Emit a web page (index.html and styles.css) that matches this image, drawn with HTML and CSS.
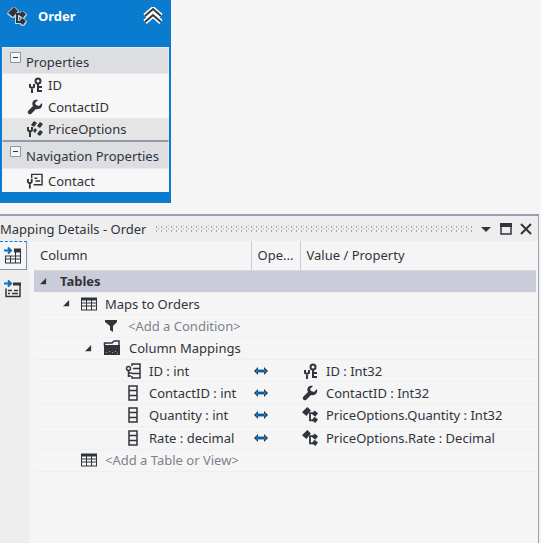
FILE: index.html
```html
<!DOCTYPE html>
<html lang="en">
<head>
<meta charset="utf-8">
<title>Mapping Details - Order</title>
<link rel="stylesheet" href="styles.css">
</head>
<body>
<svg class="sprite" aria-hidden="true">
  <symbol id="entity" viewBox="0 0 18 18">
    <path d="M6 0l4 4-5 6-5-4z"/>
    <path d="M8 7h5M9 7v8h4" fill="none" stroke="currentColor" stroke-width="2"/>
    <path d="M14 4l4 3-3 4-4-3zM14 11l4 3-3 4-4-3z"/>
  </symbol>
  <symbol id="key" viewBox="0 0 16 16">
    <g fill="none" stroke="currentColor" stroke-width="2">
      <circle cx="11" cy="4" r="2.5"/>
      <path d="M11 6v9M11 10h4M11 14h4"/>
      <path d="M3 7v3l2 1 2-1V7M5 11v5"/>
    </g>
  </symbol>
  <symbol id="wrench" viewBox="0 0 16 16">
    <path d="M15 4l-3 3-3-1-1-2 3-3C7 0 4 3 6 7l-5 5c-1 2 1 4 3 3l5-5c4 1 7-2 6-6z"/>
  </symbol>
  <symbol id="complex" viewBox="0 0 16 16">
    <path d="M7 0l3 2-3 4-3-2zM13 1l3 2-3 4-3-2zM13 9l3 2-3 4-3-2zM8 7l2 2-2 3-2-2z"/>
    <path d="M1 6v3l2 2 2-2V6M3 10v6" fill="none" stroke="currentColor" stroke-width="2"/>
  </symbol>
  <symbol id="navigation" viewBox="0 0 17 16">
    <path d="M5 5V1h11v11H7M8 5h3M9 8h5" fill="none" stroke="currentColor" stroke-width="1.5"/>
    <path d="M1 6v3l2 2 2-2V6M3 10v6" fill="none" stroke="currentColor" stroke-width="2"/>
  </symbol>
  <symbol id="table" viewBox="0 0 16 15">
    <path d="M0 1h16v13H0z"/>
    <path class="hole" d="M1 4h4v2H1zM6 4h4v2H6zM11 4h4v2h-4zM1 7h4v2H1zM6 7h4v2H6zM11 7h4v2h-4zM1 10h4v3H1zM6 10h4v3H6zM11 10h4v3h-4z"/>
  </symbol>
  <symbol id="filter" viewBox="0 0 12 12">
    <path d="M0 0h12v2L8 6v6L5 10V6L0 2z"/>
  </symbol>
  <symbol id="folder" viewBox="0 0 18 16">
    <path d="M1 5h16v10H1z"/>
    <path d="M1.500 6V3H9l2-2h5v5" fill="none" stroke="currentColor" stroke-width="1.500"/>
    <path class="dots" d="M3 12h1v1H3zM6 11h1v1H6zM9 12h1v1H9zM12 11h1v1h-1zM14 13h1v1h-1z"/>
  </symbol>
  <symbol id="column" viewBox="0 0 10 16">
    <path d="M1 1h8v14H1zM1 5.500h8M1 10.500h8" fill="none" stroke="currentColor" stroke-width="1.500"/>
  </symbol>
  <symbol id="keycolumn" viewBox="0 0 16 16">
    <path d="M7 3V1h8v14H7v-2M8 5.500h7M7 10.500h8" fill="none" stroke="currentColor" stroke-width="1.500"/>
    <path d="M3.500 8v6M4 10h3M4 13h2" fill="none" stroke="currentColor" stroke-width="1.500"/>
    <circle cx="3.500" cy="5.500" r="2" fill="none" stroke="currentColor" stroke-width="1.500"/>
  </symbol>
  <symbol id="maps" viewBox="0 0 14 8">
    <path d="M4 0v8L0 4zM10 0v8l4-4z"/>
    <path d="M2 4h10" fill="none" stroke="#0a7bd0" stroke-width="3"/>
    <path d="M4 4h6" fill="none" stroke="currentColor" stroke-width="1"/>
  </symbol>
  <symbol id="map-table" viewBox="0 0 18 17">
    <path d="M10 1h7v15H1V8h9z"/>
    <path class="hole" d="M2 9h4v2H2zM7 9h4v2H7zM12 9h4v2h-4zM9 5h2v3H9zM12 5h4v3h-4zM2 12h4v3H2zM7 12h4v3H7zM12 12h4v3h-4z"/>
    <path d="M0 3h6M4 0l3 3-3 3" fill="none" stroke="#0a6fbd" stroke-width="2"/>
  </symbol>
  <symbol id="map-function" viewBox="0 0 18 17">
    <path d="M9 2h8v3H9z"/>
    <path d="M2 8v8h14V4M4 10h4M10 10h4M4 13h2M8 13h6" fill="none" stroke="currentColor" stroke-width="1.500"/>
    <path d="M0 3h6M4 0l3 3-3 3" fill="none" stroke="#0a6fbd" stroke-width="2"/>
  </symbol>
  <symbol id="expanded" viewBox="0 0 8 8"><path d="M7 0v7H0z"/></symbol>
  <symbol id="minus" viewBox="0 0 11 11">
    <path d="M.5.5h10v10H.5z" fill="#f4f5f8" stroke="#8b95a6"/>
    <path d="M3 5h5v1H3z"/>
  </symbol>
  <symbol id="chevrons" viewBox="0 0 20 18">
    <path d="M2 9l8-7 8 7M2 15l8-7 8 7" fill="none" stroke="#fff" stroke-width="5"/>
    <path d="M2 9l8-7 8 7M2 15l8-7 8 7" fill="none" stroke="#333a42" stroke-width="2"/>
  </symbol>
  <symbol id="menu" viewBox="0 0 10 12"><path d="M0 4h10L5 9z"/></symbol>
  <symbol id="window" viewBox="0 0 12 12"><path d="M1 1h10v10H1z" fill="none" stroke="currentColor" stroke-width="1.500"/><path d="M0 0h12v4H0z"/></symbol>
  <symbol id="close" viewBox="0 0 12 12"><path d="M1 1l10 10M11 1L1 11" fill="none" stroke="currentColor" stroke-width="2"/></symbol>
</svg>

<main class="designer">
  <article class="entity">
    <header class="entity-head">
      <svg class="icon-lg outlined"><use href="#entity"/></svg>
      <h1>Order</h1>
      <button class="plain" aria-label="Collapse entity"><svg class="icon-chevrons"><use href="#chevrons"/></svg></button>
    </header>
    <div class="entity-body">
      <h2><button class="plain" aria-label="Collapse Properties"><svg class="icon-minus"><use href="#minus"/></svg></button>Properties</h2>
      <ul>
        <li><svg class="icon"><use href="#key"/></svg>ID</li>
        <li><svg class="icon"><use href="#wrench"/></svg>ContactID</li>
        <li class="selected"><svg class="icon"><use href="#complex"/></svg>PriceOptions</li>
      </ul>
      <h2 class="divided"><button class="plain" aria-label="Collapse Navigation Properties"><svg class="icon-minus"><use href="#minus"/></svg></button>Navigation Properties</h2>
      <ul class="last">
        <li><svg class="icon"><use href="#navigation"/></svg>Contact</li>
      </ul>
    </div>
  </article>
</main>

<section class="panel">
  <header class="panel-head">
    <h2>Mapping Details - Order</h2>
    <span class="grip"></span>
    <button class="plain" aria-label="Window options"><svg class="icon-window"><use href="#menu"/></svg></button>
    <button class="plain" aria-label="Maximize"><svg class="icon-window"><use href="#window"/></svg></button>
    <button class="plain" aria-label="Close"><svg class="icon-window"><use href="#close"/></svg></button>
  </header>
  <div class="panel-body">
    <nav class="modes">
      <button class="mode active" aria-label="Map to tables"><svg class="icon-lg"><use href="#map-table"/></svg></button>
      <button class="mode" aria-label="Map to functions"><svg class="icon-lg"><use href="#map-function"/></svg></button>
    </nav>
    <div class="grid">
      <table>
        <colgroup><col class="col-name"><col class="col-op"><col></colgroup>
        <thead>
          <tr><th>Column</th><th>Ope...</th><th>Value / Property</th></tr>
        </thead>
        <tbody>
          <tr class="group"><td colspan="3"><div class="cell"><button class="plain twisty" aria-label="Collapse Tables"><svg class="icon-twisty"><use href="#expanded"/></svg></button>Tables</div></td></tr>
          <tr><td colspan="3"><div class="cell level-1"><button class="plain twisty" aria-label="Collapse Maps to Orders"><svg class="icon-twisty"><use href="#expanded"/></svg></button><svg class="icon"><use href="#table"/></svg>Maps to Orders</div></td></tr>
          <tr><td colspan="3"><div class="cell level-2 hint"><span class="twisty"></span><svg class="icon-filter"><use href="#filter"/></svg>&lt;Add a Condition&gt;</div></td></tr>
          <tr><td colspan="3"><div class="cell level-2"><button class="plain twisty" aria-label="Collapse Column Mappings"><svg class="icon-twisty"><use href="#expanded"/></svg></button><svg class="icon-folder"><use href="#folder"/></svg>Column Mappings</div></td></tr>
          <tr><td><div class="cell level-3"><span class="twisty"></span><svg class="icon"><use href="#keycolumn"/></svg>ID : int</div></td><td><svg class="icon-maps"><use href="#maps"/></svg></td><td><div class="cell value"><svg class="icon"><use href="#key"/></svg>ID : Int32</div></td></tr>
          <tr><td><div class="cell level-3"><span class="twisty"></span><svg class="icon"><use href="#column"/></svg>ContactID : int</div></td><td><svg class="icon-maps"><use href="#maps"/></svg></td><td><div class="cell value"><svg class="icon"><use href="#wrench"/></svg>ContactID : Int32</div></td></tr>
          <tr><td><div class="cell level-3"><span class="twisty"></span><svg class="icon"><use href="#column"/></svg>Quantity : int</div></td><td><svg class="icon-maps"><use href="#maps"/></svg></td><td><div class="cell value"><svg class="icon"><use href="#entity"/></svg>PriceOptions.Quantity : Int32</div></td></tr>
          <tr><td><div class="cell level-3"><span class="twisty"></span><svg class="icon"><use href="#column"/></svg>Rate : decimal</div></td><td><svg class="icon-maps"><use href="#maps"/></svg></td><td><div class="cell value"><svg class="icon"><use href="#entity"/></svg>PriceOptions.Rate : Decimal</div></td></tr>
          <tr><td colspan="3"><div class="cell level-1 hint"><span class="twisty"></span><svg class="icon"><use href="#table"/></svg>&lt;Add a Table or View&gt;</div></td></tr>
        </tbody>
      </table>
    </div>
  </div>
</section>
</body>
</html>
```
FILE: styles.css
```css
* { box-sizing: border-box; }

body {
  margin: 0;
  min-height: 100vh;
  display: flex;
  flex-direction: column;
  background: #f5f5f6;
  color: #30343b;
  font: 13px/22px "Noto Sans", "Segoe UI", sans-serif;
}

h1, h2, ul { margin: 0; padding: 0; font: inherit; }
ul { list-style: none; }
svg { display: block; flex: none; fill: currentColor; }

.sprite { position: absolute; width: 0; height: 0; }
.hole { fill: #f5f5f6; }
.dots { fill: #9a9ea4; }

.icon { width: 16px; height: 16px; }
.icon-lg { width: 18px; height: 18px; }
.icon-chevrons { width: 20px; height: 18px; }
.icon-minus { width: 11px; height: 11px; }
.icon-twisty { width: 7px; height: 7px; }
.icon-filter { width: 12px; height: 12px; margin: 0 3px 0 2px; }
.icon-folder { width: 18px; height: 16px; }
.icon-maps { width: 14px; height: 8px; margin-left: 3px; }
.icon-window { width: 12px; height: 12px; }

.outlined {
  overflow: visible;
  filter: drop-shadow(1px 0 #c9d6e2) drop-shadow(-1px 0 #c9d6e2) drop-shadow(0 1px #c9d6e2);
}

.plain {
  padding: 0;
  border: 0;
  background: none;
  color: inherit;
}

/* Entity shape on the designer surface */
.designer { padding-bottom: 11px; }

.entity {
  width: 171px;
  background: #0a7bce;
  padding: 0 2px 11px;
}

.entity-head {
  display: flex;
  align-items: flex-start;
  gap: 12px;
  height: 47px;
  padding: 7px 6px 0 6px;
}

.entity-head h1 {
  flex: 1;
  color: #fff;
  font-weight: 700;
  line-height: 18px;
}

.entity-body { background: #f7f7f8; }

.entity h2 {
  display: flex;
  gap: 5px;
  height: 27px;
  padding: 3px 0 0 7px;
  background: #dddee2;
  border: 1px solid #e9eaed;
  white-space: nowrap;
}

.entity h2 button { align-self: flex-start; padding-top: 1px; }

.entity h2.divided { height: 29px; border-top: 2px solid #929aa5; }

.entity li {
  display: flex;
  align-items: center;
  gap: 5px;
  padding-left: 25px;
}

.entity li.selected { background: #e5e5e6; }
.entity .last { padding-top: 1px; }

/* Mapping details tool window */
.panel {
  flex: 1;
  display: flex;
  flex-direction: column;
  margin-right: 2px;
  border: solid #9a9fb0;
  border-width: 2px 1px 0 0;
}

.panel-head {
  display: flex;
  align-items: center;
  gap: 8px;
  height: 25px;
  padding-right: 6px;
  background: #eeeeef;
}

.grip {
  flex: 1;
  height: 7px;
  background:
    radial-gradient(circle, #a5a8b3 1px, transparent 1px) 0 0 / 5px 4px,
    radial-gradient(circle, #c4c6ce 1px, transparent 1px) 2px 2px / 5px 4px;
}

.panel-body { flex: 1; display: flex; }

.modes {
  display: flex;
  flex-direction: column;
  gap: 4px;
  width: 29px;
  background: #eeeeef;
}

.mode {
  display: flex;
  align-items: center;
  width: 27px;
  height: 29px;
  padding: 0 4px;
  border: 1px solid transparent;
  border-left: 0;
  background: none;
  color: #30343b;
}

.mode.active { border-color: #7d93ad; border-top: 1px dashed #0a7bce; background: #f5f5f6; }

.grid { flex: 1; padding: 0 2px 0 5px; }

table {
  width: 100%;
  height: 231px;
  table-layout: fixed;
  border-collapse: collapse;
}

.col-name { width: 217px; }
.col-op { width: 49px; }

th {
  height: 29px;
  padding: 0 6px;
  border-bottom: 1px solid #d4d5dc;
  font-weight: 400;
  text-align: left;
  white-space: nowrap;
}

th + th { border-left: 1px solid #c9cad5; }

td { padding: 0; border-bottom: 1px solid #eeeff0; }

.cell {
  display: flex;
  align-items: center;
  gap: 8px;
  height: 21px;
  padding-left: 4px;
  white-space: nowrap;
}

.level-1 { padding-left: 27px; }
.level-2 { padding-left: 49px; }
.level-3 { padding-left: 71px; }
.value { padding-left: 2px; }
.hint { color: #7d828a; }
.hint svg { color: #30343b; }

.twisty { width: 12px; }
.twisty svg { margin-left: 2px; }

.group { background: #cbccd9; font-weight: 700; }
.group .cell { gap: 10px; }
```
